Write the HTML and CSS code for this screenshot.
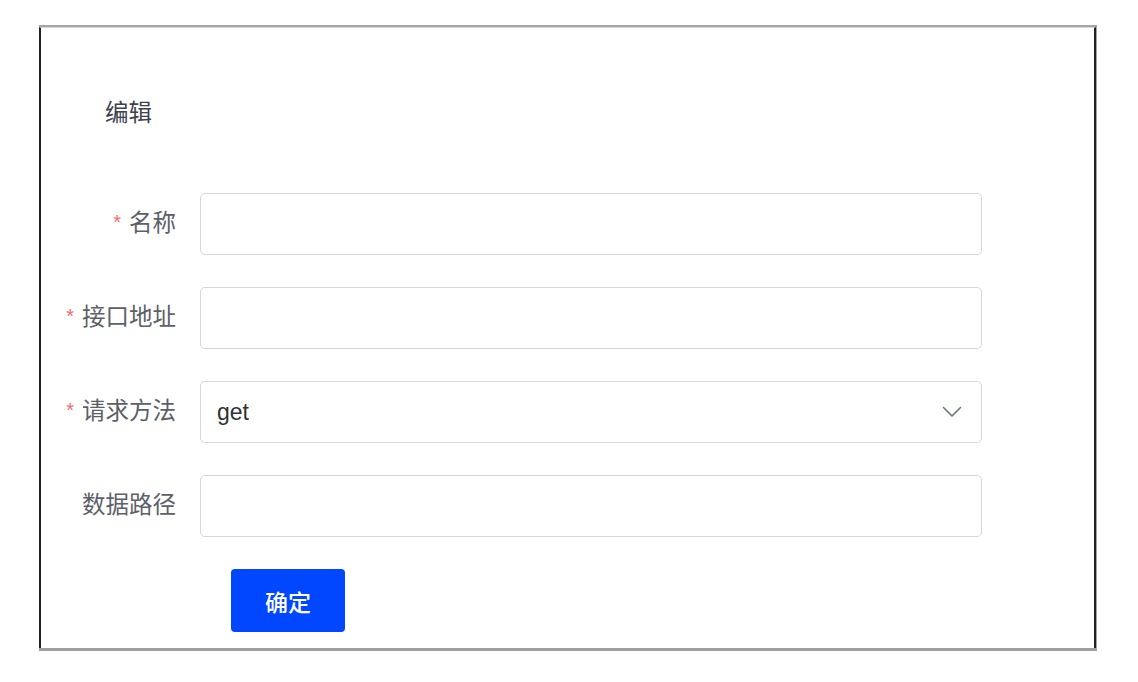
FILE: index.html
```html
<!DOCTYPE html>
<html lang="zh-CN">
<head>
<meta charset="utf-8">
<title>编辑</title>
<link rel="stylesheet" href="styles.css">
</head>
<body>
<div class="frame">
  <div class="window">
    <div class="title">编辑</div>
    <form class="form">
      <div class="row">
        <label class="label"><span class="req">*</span>名称</label>
        <div class="input"></div>
      </div>
      <div class="row">
        <label class="label"><span class="req">*</span>接口地址</label>
        <div class="input"></div>
      </div>
      <div class="row">
        <label class="label"><span class="req">*</span>请求方法</label>
        <div class="input select">
          <span class="value">get</span>
          <svg class="chev" width="20" height="12" viewBox="0 0 20 12"><path d="M1.5 1.5 L10 10 L18.5 1.5" fill="none" stroke="#6b707a" stroke-width="1.6" stroke-linecap="round" stroke-linejoin="round"/></svg>
        </div>
      </div>
      <div class="row">
        <label class="label">数据路径</label>
        <div class="input"></div>
      </div>
      <div class="actions">
        <button type="button" class="btn">确定</button>
      </div>
    </form>
  </div>
</div>
</body>
</html>
```

FILE: styles.css
```css
html, body {
  margin: 0;
  padding: 0;
  background: #ffffff;
}
body {
  font-family: "Liberation Sans", "Noto Sans CJK SC", sans-serif;
}
.frame {
  box-sizing: border-box;
  margin: 25px 0 0 39px;
  width: 1058px;
  height: 626px;
  border-top: 2px solid #a5a5a5;
  border-right: 1px solid #a5a5a5;
  border-bottom: 3px solid #a0a0a0;
}
.window {
  box-sizing: border-box;
  height: 100%;
  border-left: 2px solid #202020;
  border-right: 2px solid #202020;
  border-top: 1px solid #d6d6d6;
  padding-top: 69px;
}
.title {
  margin-left: 64px;
  font-size: 23.5px;
  line-height: 32px;
  height: 32px;
  color: #3d424d;
}
.form {
  margin-top: 64px;
  display: flex;
  flex-direction: column;
  gap: 32px;
}
.row {
  display: flex;
  align-items: center;
  height: 62px;
}
.label {
  box-sizing: border-box;
  width: 135px;
  margin-right: 24px;
  text-align: right;
  font-size: 23.5px;
  line-height: 30px;
  color: #5c6068;
  white-space: nowrap;
  position: relative;
  top: -1px;
}
.req {
  color: #f56c6c;
  font-size: 20px;
  margin-right: 8px;
  position: relative;
  top: -2px;
}
.input {
  box-sizing: border-box;
  width: 782px;
  height: 62px;
  border: 1.5px solid #d4d7de;
  border-radius: 5px;
  background: #fff;
}
.select {
  display: flex;
  align-items: center;
  justify-content: space-between;
  padding: 0 19px 0 16px;
}
.value {
  font-size: 23px;
  color: #303133;
}
.chev {
  display: block;
}
.actions {
  display: flex;
  padding-left: 190px;
}
.btn {
  width: 114px;
  height: 63px;
  border: none;
  border-radius: 4px;
  background: #0047ff;
  color: #ffffff;
  font-family: "Liberation Sans", "Noto Sans CJK SC", sans-serif;
  font-size: 23px;
  font-weight: 500;
  padding: 0;
  cursor: pointer;
}
```
